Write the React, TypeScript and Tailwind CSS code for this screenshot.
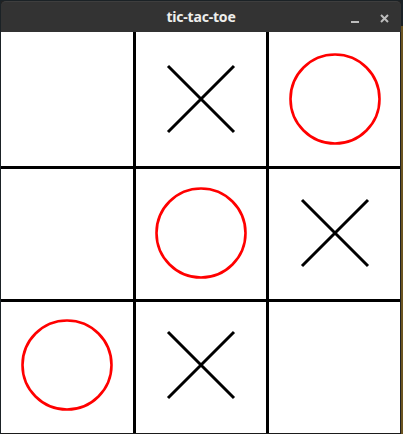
import React from "react";

type Mark = "X" | "O" | null;

const board: Mark[] = [null, "X", "O", null, "O", "X", "O", "X", null];

// marks sit slightly above the cell centre on the lower rows
const rowPad = ["pb-0", "pb-[3px]", "pb-[5px]"];

function Cross() {
  return (
    <svg width="70" height="70" viewBox="0 0 70 70">
      <path d="M2 2 L68 68 M68 2 L2 68" stroke="#000" strokeWidth="3" />
    </svg>
  );
}

function Circle() {
  return (
    <svg width="94" height="94" viewBox="0 0 94 94">
      <circle cx="47" cy="47" r="44.5" fill="none" stroke="#ff0000" strokeWidth="2.6" />
    </svg>
  );
}

export default function App() {
  return (
    <div className="w-[403px] h-[434px] bg-[#1b2226] flex">
      <div className="ml-[1px] mt-[1px] w-[400px] flex flex-col bg-[#222]">
        {/* Title bar */}
        <div className="h-[31px] rounded-t-[5px] bg-[#333333] border-t border-[#3e3e3e] flex items-center relative">
          <span className="flex-1 text-center text-[14px] font-bold text-[#eeeeec] font-['Noto_Sans',sans-serif] tracking-[-0.2px] pb-[1px]">
            tic-tac-toe
          </span>
          <div className="absolute right-[12px] top-[12px] flex items-end gap-[21px]">
            <div className="w-[8px] h-[2px] bg-[#bdbdbd]" />
            <svg width="9" height="9" viewBox="0 0 9 9">
              <path d="M1 1 L8 8 M8 1 L1 8" stroke="#bdbdbd" strokeWidth="2" />
            </svg>
          </div>
        </div>
        {/* Board */}
        <div className="grid grid-cols-[132px_130px_131px] grid-rows-[134px_130px_131px] gap-[3px] bg-black w-[399px]">
          {board.map((m, i) => (
            <div
              key={i}
              className={`bg-white flex items-center justify-center ${rowPad[Math.floor(i / 3)]}`}
            >
              {m === "X" && <Cross />}
              {m === "O" && <Circle />}
            </div>
          ))}
        </div>
        <div className="flex-1 bg-[#1b1b1b]" />
      </div>
      <div className="flex-1 bg-[#6b5420] mt-[26px]" />
    </div>
  );
}
